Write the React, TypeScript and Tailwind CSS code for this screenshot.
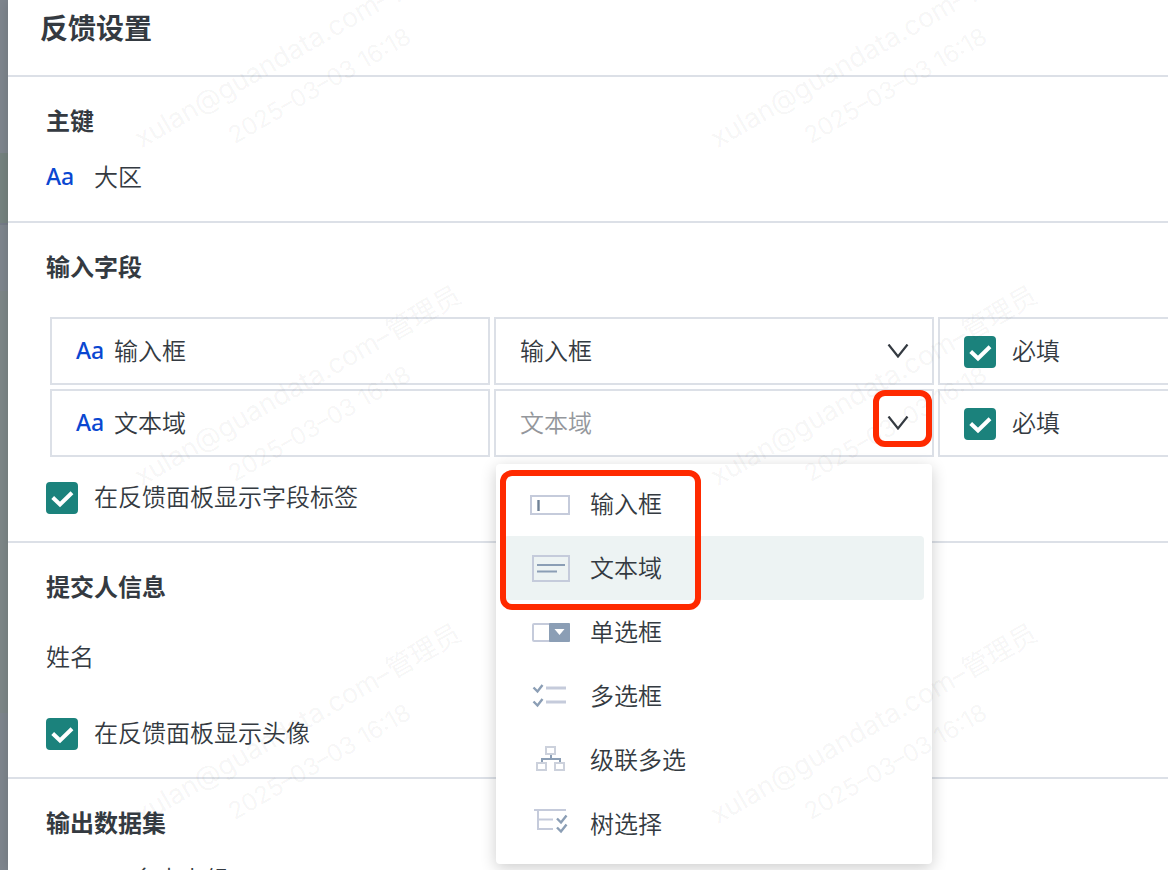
import { useState } from "react";
import type { ReactNode } from "react";
import clsx from "clsx";

const WATERMARKS = [0, 1, 2, 3, 4, 5];

function InputIcon() {
  return (
    <svg width="40" height="40" viewBox="0 0 40 40" fill="none">
      <rect x="1" y="12" width="38" height="18" stroke="#c5cbdb" strokeWidth="2" />
      <path d="M8.5 16v11" stroke="#6f8196" strokeWidth="2.4" />
    </svg>
  );
}

function TextareaIcon() {
  return (
    <svg width="40" height="40" viewBox="0 0 40 40" fill="none">
      <rect x="3" y="8" width="36" height="25" stroke="#c5cbdb" strokeWidth="2" />
      <path d="M7 17h28M7 23.5h20" stroke="#8b9eb5" strokeWidth="2.2" />
    </svg>
  );
}

function SelectIcon() {
  return (
    <svg width="40" height="40" viewBox="0 0 40 40" fill="none">
      <rect x="3" y="12" width="36" height="17" rx="1" stroke="#c5cbdb" strokeWidth="2" />
      <rect x="19" y="11" width="21" height="19" rx="1" fill="#8b9eb5" />
      <path d="M24.5 17h10l-5 6z" fill="#fff" />
    </svg>
  );
}

function MultiSelectIcon() {
  return (
    <svg width="40" height="40" viewBox="0 0 40 40" fill="none">
      <path d="M16 12h20M16 26h20" stroke="#c5cbdb" strokeWidth="2.8" />
      <path d="M3.5 11.5l4 4 5-6.5M3.5 25.5l4 4 5-6.5" stroke="#8b9eb5" strokeWidth="2.4" />
    </svg>
  );
}

function CascadeIcon() {
  return (
    <svg width="40" height="40" viewBox="0 0 40 40" fill="none">
      <path d="M21 15v4M12 22.5v-3.5h18v3.5" stroke="#8b9eb5" strokeWidth="2" />
      <path d="M16 7h9v7h-9zM7 23h9v7h-9zM25 23h9v7h-9z" stroke="#ccd1dc" strokeWidth="2" />
    </svg>
  );
}

function TreeIcon() {
  return (
    <svg width="40" height="40" viewBox="0 0 40 40" fill="none">
      <path d="M4 6h32M8 6v19h15M8 15.5h15" stroke="#c5cbdb" strokeWidth="2" />
      <path d="M27 14.5l4 4 5.5-7M27 23.5l4 4 5.5-7" stroke="#8b9eb5" strokeWidth="2.4" />
    </svg>
  );
}

const FIELD_TYPES = [
  { label: "输入框", Icon: InputIcon },
  { label: "文本域", Icon: TextareaIcon },
  { label: "单选框", Icon: SelectIcon },
  { label: "多选框", Icon: MultiSelectIcon },
  { label: "级联多选", Icon: CascadeIcon },
  { label: "树选择", Icon: TreeIcon },
];

function TextTypeMark() {
  return (
    <span className="w-7 shrink-0 font-['Noto_Sans'] text-[23px] font-medium text-[#0a47d1]">Aa</span>
  );
}

function Check({ label }: { label: string }) {
  const [checked, setChecked] = useState(true);

  return (
    <label className="flex w-fit items-center gap-4">
      <span className="grid size-8 shrink-0">
        <input
          type="checkbox"
          checked={checked}
          onChange={(e) => setChecked(e.target.checked)}
          className="col-start-1 row-start-1 size-8 appearance-none rounded border-2 border-[#dadde6] bg-white checked:border-[#1b827c] checked:bg-[#1b827c]"
        />
        {checked && (
          <svg viewBox="0 0 32 32" className="pointer-events-none col-start-1 row-start-1 size-8" fill="none">
            <path d="M6.7 15.5l7.3 7L26 10.8" stroke="#fff" strokeWidth="4" />
          </svg>
        )}
      </span>
      <span className="-my-2 pb-1">{label}</span>
    </label>
  );
}

function TypeSelect({ name, initial, muted }: { name: string; initial: string; muted?: boolean }) {
  const [value, setValue] = useState(initial);

  return (
    <div className="grid flex-1 items-center">
      <select
        aria-label={name}
        value={value}
        onChange={(e) => setValue(e.target.value)}
        className={clsx(
          "col-start-1 row-start-1 h-16 w-full appearance-none bg-transparent px-6 pb-0.5 outline-none",
          muted && "text-[#94979c]"
        )}
      >
        {FIELD_TYPES.map((t) => (
          <option key={t.label}>{t.label}</option>
        ))}
      </select>
      <svg
        viewBox="0 0 22 14"
        className="pointer-events-none col-start-1 row-start-1 mr-[23px] h-3.5 w-[22px] justify-self-end"
        fill="none"
      >
        <path d="M1.5 0.5l9.5 12 9.5-12" stroke="#343a41" strokeWidth="2.2" />
      </svg>
    </div>
  );
}

function TypeMenu() {
  const [active, setActive] = useState("文本域");

  return (
    <div
      role="listbox"
      aria-label="字段类型"
      className="absolute inset-x-0 top-full z-10 mt-[9px] rounded bg-white p-2 shadow-[0_4px_16px_rgba(0,0,0,0.2)]"
    >
      {FIELD_TYPES.map(({ label, Icon }) => (
        <button
          key={label}
          type="button"
          role="option"
          aria-selected={active === label}
          onClick={() => setActive(label)}
          className={clsx(
            "flex h-16 w-full items-center gap-5 rounded pl-[26px] text-left",
            active === label && "bg-[#edf3f3]"
          )}
        >
          <Icon />
          <span className="pb-0.5">{label}</span>
        </button>
      ))}
    </div>
  );
}

function Section({ title, children }: { title: string; children: ReactNode }) {
  return (
    <section className="border-b-2 border-[#dce0e7] py-[27px] pl-[38px]">
      <h2 className="font-bold">{title}</h2>
      {children}
    </section>
  );
}

function FieldName({ children }: { children: ReactNode }) {
  return (
    <div className="flex h-[68px] items-center gap-2.5 border-2 border-[#dce0e7] pb-0.5 pl-6">
      <TextTypeMark />
      <span>{children}</span>
    </div>
  );
}

function RequiredCell() {
  return (
    <div className="flex items-center border-2 border-r-0 border-[#dce0e7] pt-0.5 pl-6">
      <Check label="必填" />
    </div>
  );
}

function Watermark() {
  return (
    <div aria-hidden="true" className="pointer-events-none absolute inset-0 z-20 overflow-hidden">
      <div className="-mt-[102px] ml-[21px] grid grid-cols-[576px_576px] auto-rows-[338px]">
        {WATERMARKS.map((i) => (
          <div key={i} className="flex items-center justify-center">
            <div className="-rotate-30 text-center font-normal whitespace-nowrap text-black/5 font-['Inter','Noto_Sans_CJK_SC',sans-serif]">
              <p className="text-[27px] leading-[44px]">xulan@guandata.com–管理员</p>
              <p className="text-[24px] leading-[44px]">2025–03–03 16:18</p>
            </div>
          </div>
        ))}
      </div>
    </div>
  );
}

export default function App() {
  return (
    <div className="relative flex h-screen overflow-hidden bg-[#7f868e] font-['Noto_Sans_CJK_SC',sans-serif] text-[24px] leading-8 font-[350] text-[#343a41]">
      <div className="w-2 shrink-0">
        <div className="h-[153px]" />
        <div className="h-[72px] border-b-2 border-[#767c88] bg-[#768380]" />
        <div className="h-[66px]" />
        <div className="h-[422px] bg-[#7e8788]" />
      </div>

      <main className="min-w-0 flex-1 bg-white shadow-[0_0_12px_rgba(0,0,0,0.15)]">
        <header className="border-b-2 border-[#dce0e7] pt-[7px] pb-7 pl-8">
          <h1 className="text-[28px] leading-10 font-bold">反馈设置</h1>
        </header>

        <Section title="主键">
          <div className="mt-6 flex items-center gap-5 pb-0.5">
            <TextTypeMark />
            <span>大区</span>
          </div>
        </Section>

        <Section title="输入字段">
          <div className="mt-[35px] ml-1 grid grid-cols-[440px_440px_minmax(0,1fr)] gap-1">
            <FieldName>输入框</FieldName>
            <div className="flex border-2 border-[#dce0e7]">
              <TypeSelect name="输入框类型" initial="输入框" />
            </div>
            <RequiredCell />

            <FieldName>文本域</FieldName>
            <div className="relative flex border-2 border-[#dce0e7]">
              <TypeSelect name="文本域类型" initial="文本域" muted />
              <TypeMenu />
              <div className="pointer-events-none absolute -top-px right-0 z-30 h-[57px] w-[59px] rounded-xl border-6 border-[#ff2a00]" />
              <div className="pointer-events-none absolute top-[79px] left-1 z-30 h-[140px] w-[201px] rounded-xl border-6 border-[#ff2a00]" />
            </div>
            <RequiredCell />
          </div>
          <div className="mt-[25px]">
            <Check label="在反馈面板显示字段标签" />
          </div>
        </Section>

        <Section title="提交人信息">
          <p className="mt-[38px]">姓名</p>
          <div className="mt-[46px]">
            <Check label="在反馈面板显示头像" />
          </div>
        </Section>

        <Section title="输出数据集">
          <p className="mt-6 ml-[87px]">多木上组</p>
        </Section>
      </main>

      <Watermark />
    </div>
  );
}
